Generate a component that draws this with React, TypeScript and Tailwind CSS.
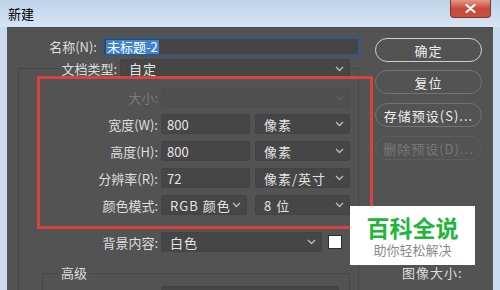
import React from "react";

const Chevron = ({ color = "#c4c4c4" }: { color?: string }) => (
  <svg width="9" height="6" viewBox="0 0 9 6" className="shrink-0">
    <polyline points="1,1 4.5,4.5 8,1" fill="none" stroke={color} strokeWidth="1.3" />
  </svg>
);

const Select = ({ text, w, disabled }: { text: string; w: string; disabled?: boolean }) => (
  <div
    className={`${w} h-[20px] flex items-center justify-between pl-[8px] pr-[5px] rounded-[2px] border ${
      disabled ? "border-[#4d4d4d] bg-[#4f4f4f]" : "border-[#434343] bg-[#464646]"
    }`}
  >
    <span className="text-[13px] leading-none text-[#e4e4e4] tracking-[1px] whitespace-nowrap">{text}</span>
    <Chevron color={disabled ? "#5e5e5e" : "#bdbdbd"} />
  </div>
);

const Input = ({ text, w }: { text: string; w: string }) => (
  <div className={`${w} h-[20px] flex items-center pl-[5px] rounded-[2px] border border-[#434343] bg-[#464646]`}>
    <span className="text-[13px] leading-none text-[#e6e6e6]">{text}</span>
  </div>
);

const Label = ({ text, dim }: { text: string; dim?: boolean }) => (
  <div className={`w-[139px] text-right text-[13px] leading-none whitespace-nowrap ${dim ? "text-[#7a7a7a]" : "text-[#dedede]"}`}>
    {text}
  </div>
);

const Btn = ({ text, def, disabled, mt }: { text: string; def?: boolean; disabled?: boolean; mt: string }) => (
  <div
    className={`${mt} h-[24px] w-[107px] rounded-full flex items-center justify-center border ${
      def ? "border-[#cfcfcf] border-[1.5px]" : disabled ? "border-[#5d5d5d]" : "border-[#737373]"
    }`}
  >
    <span className={`text-[13px] leading-none tracking-[1px] ${disabled ? "text-[#787878]" : "text-[#eeeeee]"}`}>{text}</span>
  </div>
);

export default function App() {
  return (
    <div className="w-[500px] h-[290px] overflow-hidden flex flex-col bg-[#cadcef] font-['Noto_Sans_CJK_SC','Noto_Sans',sans-serif]">
      {/* title bar */}
      <div className="h-[27px] shrink-0 relative flex items-center pl-[8px] bg-gradient-to-b from-[#bed3ea] to-[#d7e5f4]">
        <span className="text-[13px] text-black leading-none">新建</span>
        <div className="absolute right-[9px] top-0 w-[41px] h-[18px] rounded-b-[4px] border border-t-0 border-[#7a3a33] bg-gradient-to-b from-[#e3978a] via-[#c84a3b] to-[#c9503f] flex items-center justify-center">
          <svg width="11" height="9" viewBox="0 0 11 9">
            <path d="M1.5 1 L9.5 8 M9.5 1 L1.5 8" stroke="white" strokeWidth="2.2" strokeLinecap="round" />
          </svg>
        </div>
      </div>

      {/* body */}
      <div className="flex-1 flex px-[7px] bg-[#c9dbee]">
        <div className="flex-1 bg-[#535353] relative flex overflow-hidden border-t border-[#4a4a4a]">
          {/* left column */}
          <div className="w-[368px] flex flex-col pt-[9px]">
            {/* name row */}
            <div className="flex items-center h-[19px]">
              <div className="w-[90px] text-right text-[13px] leading-none text-[#dedede] whitespace-nowrap">名称(N):</div>
              <div className="ml-[5px] w-[258px] h-[19px] flex items-center pl-[2px] border-2 border-[#35587e] bg-[#454545]">
                <span className="text-[13px] leading-[14px] px-[1px] bg-[#3e83d3] text-white">未标题-2</span>
              </div>
            </div>

            {/* preset group */}
            <div className="mt-[12px] ml-[11px] w-[341px] flex-1 flex flex-col border-l border-t border-r border-[#484848]">
              <div className="-mt-[10px] flex items-center h-[19px]">
                <div className="ml-[40px] h-[19px] w-[61px] bg-[#535353] flex items-center justify-end pr-[3px]">
                  <span className="text-[13px] leading-none text-[#dedede] whitespace-nowrap">文档类型:</span>
                </div>
                <Select text="自定" w="w-[230px]" />
              </div>

              <div className="mt-[10px] flex items-center h-[19px]">
                <Label text="大小:" dim />
                <div className="ml-[3px]">
                  <Select text="" w="w-[189px]" disabled />
                </div>
              </div>

              <div className="mt-[7px] flex items-center h-[20px]">
                <Label text="宽度(W):" />
                <div className="ml-[3px] flex gap-[5px]">
                  <Input text="800" w="w-[89px]" />
                  <Select text="像素" w="w-[95px]" />
                </div>
              </div>

              <div className="mt-[7px] flex items-center h-[20px]">
                <Label text="高度(H):" />
                <div className="ml-[3px] flex gap-[5px]">
                  <Input text="800" w="w-[89px]" />
                  <Select text="像素" w="w-[95px]" />
                </div>
              </div>

              <div className="mt-[7px] flex items-center h-[20px]">
                <Label text="分辨率(R):" />
                <div className="ml-[3px] flex gap-[5px]">
                  <Input text="72" w="w-[89px]" />
                  <Select text="像素/英寸" w="w-[95px]" />
                </div>
              </div>

              <div className="mt-[7px] flex items-center h-[20px]">
                <Label text="颜色模式:" />
                <div className="ml-[3px] flex gap-[8px]">
                  <Select text="RGB 颜色" w="w-[86px]" />
                  <Select text="8 位" w="w-[95px]" />
                </div>
              </div>

              <div className="mt-[17px] flex items-center h-[20px]">
                <Label text="背景内容:" />
                <div className="ml-[3px] flex items-center gap-[6px]">
                  <Select text="白色" w="w-[161px]" />
                  <div className="w-[14px] h-[14px] bg-white border border-[#2f2f2f]" />
                </div>
              </div>

              {/* advanced group */}
              <div className="mt-[21px] ml-[23px] w-[308px] flex-1 flex flex-col border-l border-t border-r border-[#484848]">
                <div className="-mt-[11px] h-[18px] flex items-center">
                  <span className="ml-[15px] px-[3px] bg-[#535353] text-[13px] leading-none text-[#dedede]">高级</span>
                </div>
                <div className="mt-[5px] flex items-center h-[20px]">
                  <div className="w-[114px] text-right text-[13px] leading-none text-[#dedede] whitespace-nowrap">颜色配置文件:</div>
                  <div className="ml-[4px] w-[178px] h-[20px] flex items-center pl-[6px] border border-[#434343] bg-[#464646]">
                    <span className="text-[12px] leading-none text-[#e0e0e0] whitespace-nowrap">工作中的 RGB: sRGB IEC</span>
                  </div>
                </div>
              </div>
            </div>
          </div>

          {/* right column */}
          <div className="w-[107px] flex flex-col">
            <Btn text="确定" def mt="mt-[10px]" />
            <Btn text="复位" mt="mt-[8px]" />
            <Btn text="存储预设(S)..." mt="mt-[9px]" />
            <Btn text="删除预设(D)..." disabled mt="mt-[9px]" />
            <div className="mt-[105px] pl-[27px] text-[13px] leading-[16px] text-[#dedede] tracking-[1px] whitespace-nowrap">图像大小:</div>
            <div className="mt-[6px] pl-[35px] text-[13px] leading-[16px] text-[#dedede]">1.83M</div>
          </div>

          {/* red annotation rectangle */}
          <div className="absolute left-[30px] top-[48px] w-[336px] h-[153px] border-[3px] border-[#d7433e] rounded-[1px] pointer-events-none" />

          {/* watermark */}
          <div className="absolute left-[343px] top-[178px] w-[125px] h-[59px] bg-white flex flex-col items-center justify-center">
            <span className="text-[23px] leading-[24px] font-bold text-[#21b53a]">百科全说</span>
            <span className="mt-[4px] text-[13px] leading-[14px] text-[#8a8a8a]">助你轻松解决</span>
          </div>
        </div>
      </div>
    </div>
  );
}
